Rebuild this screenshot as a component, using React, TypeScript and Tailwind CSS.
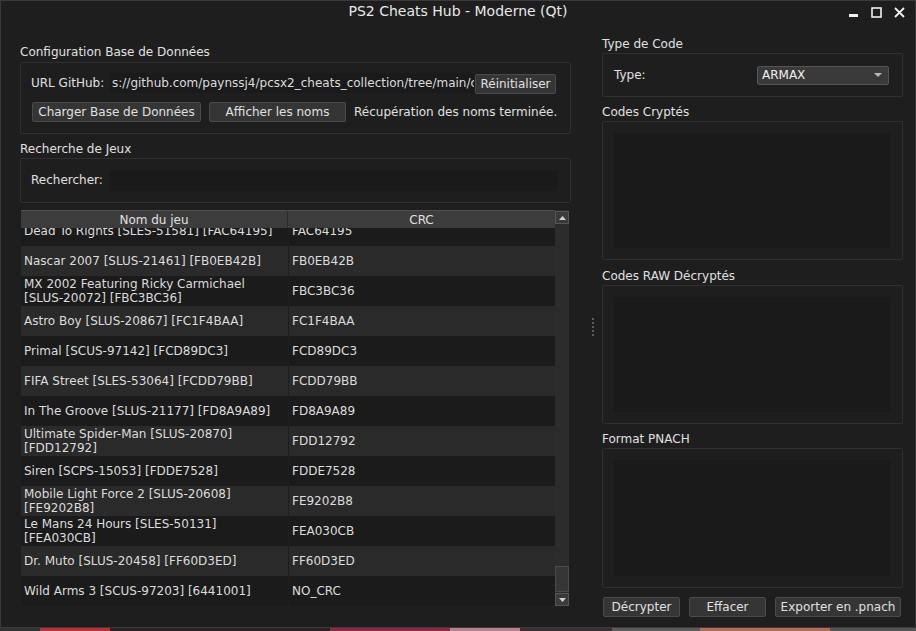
import React from 'react';

type Row = { name: string[]; crc: string };

const rows: Row[] = [
  { name: ['Dead To Rights [SLES-51581] [FAC64195]'], crc: 'FAC64195' },
  { name: ['Nascar 2007 [SLUS-21461] [FB0EB42B]'], crc: 'FB0EB42B' },
  { name: ['MX 2002 Featuring Ricky Carmichael', '[SLUS-20072] [FBC3BC36]'], crc: 'FBC3BC36' },
  { name: ['Astro Boy [SLUS-20867] [FC1F4BAA]'], crc: 'FC1F4BAA' },
  { name: ['Primal [SCUS-97142] [FCD89DC3]'], crc: 'FCD89DC3' },
  { name: ['FIFA Street [SLES-53064] [FCDD79BB]'], crc: 'FCDD79BB' },
  { name: ['In The Groove [SLUS-21177] [FD8A9A89]'], crc: 'FD8A9A89' },
  { name: ['Ultimate Spider-Man [SLUS-20870]', '[FDD12792]'], crc: 'FDD12792' },
  { name: ['Siren [SCPS-15053] [FDDE7528]'], crc: 'FDDE7528' },
  { name: ['Mobile Light Force 2 [SLUS-20608]', '[FE9202B8]'], crc: 'FE9202B8' },
  { name: ['Le Mans 24 Hours [SLES-50131]', '[FEA030CB]'], crc: 'FEA030CB' },
  { name: ['Dr. Muto [SLUS-20458] [FF60D3ED]'], crc: 'FF60D3ED' },
  { name: ['Wild Arms 3 [SCUS-97203] [6441001]'], crc: 'NO_CRC' },
];

function Label({ children, className = '' }: { children: React.ReactNode; className?: string }) {
  return <div className={`h-[18px] leading-[20px] text-[#e0e0e0] ${className}`}>{children}</div>;
}

function Btn({ children, className = '' }: { children: React.ReactNode; className?: string }) {
  return (
    <button
      className={`h-[20px] shrink-0 rounded-[2px] border border-[#4a4a4a] bg-[#353535] text-[12px] leading-none text-[#e0e0e0] flex items-center justify-center ${className}`}
    >
      {children}
    </button>
  );
}

function TextBox({ className = '' }: { className?: string }) {
  // group box with an empty text edit inside
  return (
    <div className={`mt-px rounded-[2px] border border-[#2f2f2f] p-[11px] pr-[12px] ${className}`}>
      <div className="h-full bg-[#1a1a1a]" />
    </div>
  );
}

function Arrow({ up }: { up?: boolean }) {
  return (
    <svg width="7" height="4" viewBox="0 0 7 4">
      <path d={up ? 'M0 4 L3.5 0 L7 4 Z' : 'M0 0 L7 0 L3.5 4 Z'} fill="#d0d0d0" />
    </svg>
  );
}

function GameTable() {
  return (
    <div className="mt-[7px] ml-px w-[548px] h-[396px] flex">
      <div className="w-[534px] flex flex-col">
        {/* Header */}
        <div className="h-[18px] flex bg-[#3c3c3c] border-t border-[#505050] text-[#e0e0e0]">
          <div className="w-[267px] border-r border-[#2a2a2a] flex items-center justify-center leading-none">Nom du jeu</div>
          <div className="flex-1 flex items-center justify-center leading-none">CRC</div>
        </div>
        {/* Rows */}
        <div className="h-[378px] overflow-hidden">
          <div className="-mt-[12px]">
            {rows.map((r, i) => (
              <div key={i} className={`h-[30px] flex text-[#dcdcdc] ${i % 2 ? 'bg-[#2a2a2a]' : 'bg-[#1b1b1b]'}`}>
                <div className="w-[267px] pl-[3px] flex flex-col justify-center leading-[14px]">
                  {r.name.map((l, j) => (
                    <div key={j} className="whitespace-nowrap">{l}</div>
                  ))}
                </div>
                <div className="flex-1 border-l border-[#1e1e1e] pl-[3px] flex items-center">{r.crc}</div>
              </div>
            ))}
          </div>
        </div>
      </div>
      {/* Scrollbar */}
      <div className="w-[14px] bg-[#2c2c2c] flex flex-col">
        <div className="mt-px h-[13px] border border-[#555] bg-[#3a3a3a] flex items-center justify-center">
          <Arrow up />
        </div>
        <div className="flex-1" />
        <div className="h-[26px] border border-[#4a4a4a] bg-[#363636]" />
        <div className="mt-px h-[13px] border border-[#555] bg-[#3a3a3a] flex items-center justify-center">
          <Arrow />
        </div>
      </div>
    </div>
  );
}

export default function App() {
  return (
    <div className="w-[916px] h-[631px] bg-[#1e1e1e] font-['DejaVu_Sans',sans-serif] text-[12px] flex flex-col overflow-hidden">
      <div className="h-[628px] border border-[#3a3a3a] flex flex-col">
        {/* Title bar */}
        <div className="h-[25px] relative flex justify-center">
          <span className="text-[14px] leading-[20px] text-[#e8e8e8]">PS2 Cheats Hub - Moderne (Qt)</span>
          <div className="absolute right-[10px] top-[6px] flex items-center gap-[12px]">
            <svg width="11" height="11" viewBox="0 0 11 11">
              <rect x="1" y="7" width="9" height="3" fill="#f0f0f0" />
            </svg>
            <svg width="11" height="11" viewBox="0 0 11 11">
              <rect x="1" y="1" width="9" height="9" fill="none" stroke="#f0f0f0" strokeWidth="1.6" />
            </svg>
            <svg width="11" height="11" viewBox="0 0 11 11">
              <path d="M1 1 L10 10 M10 1 L1 10" stroke="#f0f0f0" strokeWidth="1.8" />
            </svg>
          </div>
        </div>

        <div className="flex-1 flex">
          {/* Left column */}
          <div className="ml-[19px] w-[551px] pt-[16px] flex flex-col">
            <Label>Configuration Base de Données</Label>
            <div className="mt-[2px] h-[72px] rounded-[2px] border border-[#2f2f2f] pl-[10px] pt-[10px] flex flex-col">
              <div className="h-[20px] flex items-center">
                <span className="w-[79px] shrink-0 text-[#e0e0e0]">URL GitHub:</span>
                <div className="w-[364px] shrink-0 h-[20px] bg-[#1a1a1a] overflow-hidden whitespace-nowrap leading-[20px] text-[#dcdcdc] pl-[2px]">
                  s://github.com/paynssj4/pcsx2_cheats_collection/tree/main/c
                </div>
                <Btn className="ml-px mt-[2px] w-[81px]">Réinitialiser</Btn>
              </div>
              <div className="mt-[9px] h-[20px] flex items-center">
                <Btn className="ml-px w-[169px]">Charger Base de Données</Btn>
                <Btn className="ml-[8px] w-[137px]">Afficher les noms</Btn>
                <span className="ml-[8px] text-[#e0e0e0]">Récupération des noms terminée.</span>
              </div>
            </div>

            <Label className="mt-[5px]">Recherche de Jeux</Label>
            <div className="mt-px h-[45px] rounded-[2px] border border-[#2f2f2f] pl-[10px] pt-[11px] flex">
              <span className="w-[78px] h-[21px] leading-[21px] text-[#e0e0e0]">Rechercher:</span>
              <div className="w-[449px] h-[21px] bg-[#1a1a1a]" />
            </div>

            <GameTable />
          </div>

          {/* Splitter */}
          <div className="w-[31px] pl-[21px] flex items-center">
            <div className="h-[18px] border-l-2 border-dotted border-[#5c5c5c]" />
          </div>

          {/* Right column */}
          <div className="w-[301px] pt-[8px] flex flex-col">
            <Label>Type de Code</Label>
            <div className="mt-px h-[44px] rounded-[2px] border border-[#2f2f2f] pl-[11px] pr-[13px] flex items-center justify-between">
              <span className="text-[#e0e0e0]">Type:</span>
              <div className="w-[132px] h-[19px] rounded-[2px] border border-[#555] bg-[#3a3a3a] pl-[4px] pr-[6px] flex items-center justify-between text-[#f0f0f0]">
                <span className="leading-none">ARMAX</span>
                <svg width="8" height="4" viewBox="0 0 8 4">
                  <path d="M0 0 L8 0 L4 4 Z" fill="#b8b8b8" />
                </svg>
              </div>
            </div>

            <Label className="mt-[5px]">Codes Cryptés</Label>
            <TextBox className="h-[139px]" />

            <Label className="mt-[6px]">Codes RAW Décryptés</Label>
            <TextBox className="h-[139px]" />

            <Label className="mt-[5px]">Format PNACH</Label>
            <TextBox className="h-[140px]" />

            <div className="mt-[9px] flex gap-[9px] ml-px">
              <Btn className="w-[77px] h-[19px]">Décrypter</Btn>
              <Btn className="w-[77px] h-[19px]">Effacer</Btn>
              <Btn className="w-[126px] h-[19px]">Exporter en .pnach</Btn>
            </div>
          </div>
        </div>
      </div>
      {/* desktop showing under the window */}
      <div className="h-[3px] bg-[linear-gradient(90deg,#333_0px,#333_40px,#b8303c_40px,#b8303c_110px,#2a2224_110px,#2a2224_330px,#8c2a44_330px,#8c2a44_450px,#b88090_450px,#b88090_520px,#3a3030_520px,#3a3030_612px,#5a5a5a_612px,#5a5a5a_700px,#b86a5a_700px,#b86a5a_830px,#555_830px)]" />
    </div>
  );
}
